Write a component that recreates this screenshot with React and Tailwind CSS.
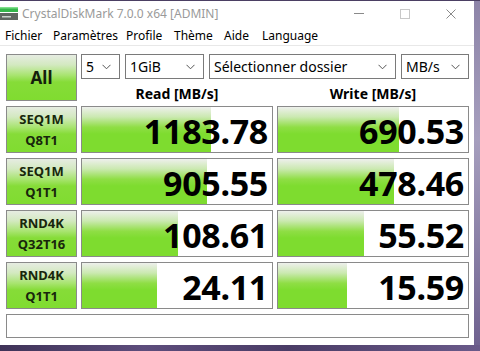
import React from "react";

const font = { fontFamily: '"Noto Sans", "Open Sans", "Liberation Sans", sans-serif' };

function Chevron() {
  return (
    <svg width="9" height="6" viewBox="0 0 9 6" className="shrink-0">
      <polyline points="0.5,0.8 4.5,4.8 8.5,0.8" fill="none" stroke="#555" strokeWidth="1" />
    </svg>
  );
}

function Select({ w, text }) {
  return (
    <div className={`${w} h-[25px] border border-[#7a7a7a] bg-white flex items-center justify-between pl-[4px] pr-[8px] text-[14px] text-black`}>
      <span className="whitespace-nowrap">{text}</span>
      <Chevron />
    </div>
  );
}

const btnGrad =
  "bg-[linear-gradient(to_bottom,#e6ece2_0%,#d3e9c0_22%,#a8e470_45%,#86dc38_60%,#80dc30_100%)]";
const barGrad =
  "bg-[linear-gradient(to_bottom,#eef0ec_0%,#cbe9b1_22%,#8fde45_45%,#7edc2f_60%,#7edc2f_100%)]";

function Label({ a, b }) {
  return (
    <div className={`w-[71px] h-[47px] border border-[#8a8a8a] ${btnGrad} flex flex-col items-center justify-center leading-[21px] text-[13px] font-bold text-[#18260c]`}>
      <span>{a}</span>
      <span>{b}</span>
    </div>
  );
}

function Value({ v, bar }) {
  return (
    <div className="relative w-[192px] h-[47px] border border-[#8a8a8a] bg-white overflow-hidden">
      <div className={`absolute left-0 top-0 bottom-0 ${barGrad}`} style={{ width: bar }} />
      <div className="relative h-full flex items-center justify-end pr-[4px] pt-[3px] text-[34px] font-bold text-black tracking-[-0.3px]">
        {v}
      </div>
    </div>
  );
}

const rows = [
  ["SEQ1M", "Q8T1", "1183.78", 129, "690.53", 121],
  ["SEQ1M", "Q1T1", "905.55", 125, "478.46", 116],
  ["RND4K", "Q32T16", "108.61", 96, "55.52", 86],
  ["RND4K", "Q1T1", "24.11", 75, "15.59", 69],
];

export default function App() {
  return (
    <div
      className="w-[480px] h-[351px] overflow-hidden flex flex-col bg-[linear-gradient(90deg,#3f3358,#5d4d7c_30%,#4a3c66_60%,#6a5a8a)]"
      style={font}
    >
      <div className="h-[1px] bg-[#4b3f63] shrink-0" />
      <div className="flex shrink-0">
        <div className="w-[474px] h-[344px] bg-white flex flex-col">
          {/* title bar */}
          <div className="h-[25px] flex items-center shrink-0">
            <svg width="20" height="14" viewBox="0 0 20 14" className="mt-[1px]">
              <rect x="0" y="0" width="18" height="5" fill="#35b54a" />
              <rect x="0" y="0" width="18" height="1.5" fill="#7fe08a" />
              <rect x="0" y="6" width="18" height="7" fill="#5f6660" />
              <rect x="2" y="9" width="9" height="1.5" fill="#c9d1cb" />
            </svg>
            <span className="ml-[2px] text-[12px] text-[#9a9a9a]">CrystalDiskMark 7.0.0 x64 [ADMIN]</span>
            <div className="ml-auto flex items-center h-full">
              <div className="w-[46px] flex justify-center">
                <div className="w-[10px] h-[1px] bg-[#8a8a8a]" />
              </div>
              <div className="w-[46px] flex justify-center">
                <div className="w-[10px] h-[10px] border border-[#c8c8c8]" />
              </div>
              <div className="w-[46px] flex justify-center">
                <svg width="10" height="10" viewBox="0 0 10 10">
                  <path d="M0.5 0.5 L9.5 9.5 M9.5 0.5 L0.5 9.5" stroke="#8a8a8a" strokeWidth="1" />
                </svg>
              </div>
            </div>
          </div>
          {/* menu */}
          <div className="h-[20px] flex items-center pl-[5px] text-[12px] text-black border-b border-[#e8e8e8] shrink-0">
            <span className="w-[48px]">Fichier</span>
            <span className="w-[73px]">Paramètres</span>
            <span className="w-[48px]">Profile</span>
            <span className="w-[50px]">Thème</span>
            <span className="w-[38px]">Aide</span>
            <span>Language</span>
          </div>
          {/* body */}
          <div className="flex flex-col gap-[5px] pl-[6px] pt-[8px]">
            <div className="flex gap-[4px]">
              <div className={`w-[71px] h-[47px] border border-[#8a8a8a] ${btnGrad} flex items-center justify-center text-[17px] font-bold text-[#14200c]`}>
                All
              </div>
              <div className="flex flex-col">
                <div className="flex gap-[5px]">
                  <Select w="w-[39px]" text="5" />
                  <Select w="w-[79px]" text="1GiB" />
                  <Select w="w-[187px]" text="Sélectionner dossier" />
                  <Select w="w-[68px]" text="MB/s" />
                </div>
                <div className="flex gap-[4px] h-[22px] items-center pt-[6px] text-[14px] font-bold text-black">
                  <div className="w-[192px] text-center">Read [MB/s]</div>
                  <div className="w-[192px] text-center">Write [MB/s]</div>
                </div>
              </div>
            </div>
            {rows.map((r) => (
              <div key={r[0] + r[1]} className="flex gap-[4px]">
                <Label a={r[0]} b={r[1]} />
                <Value v={r[2]} bar={r[3]} />
                <Value v={r[4]} bar={r[5]} />
              </div>
            ))}
            <div className="w-[463px] h-[24px] border border-[#8a8a8a] bg-white" />
          </div>
        </div>
        <div className="flex-1 bg-[linear-gradient(to_bottom,#8d84a8,#a69fbe_40%,#6f6290)]" />
      </div>
    </div>
  );
}
